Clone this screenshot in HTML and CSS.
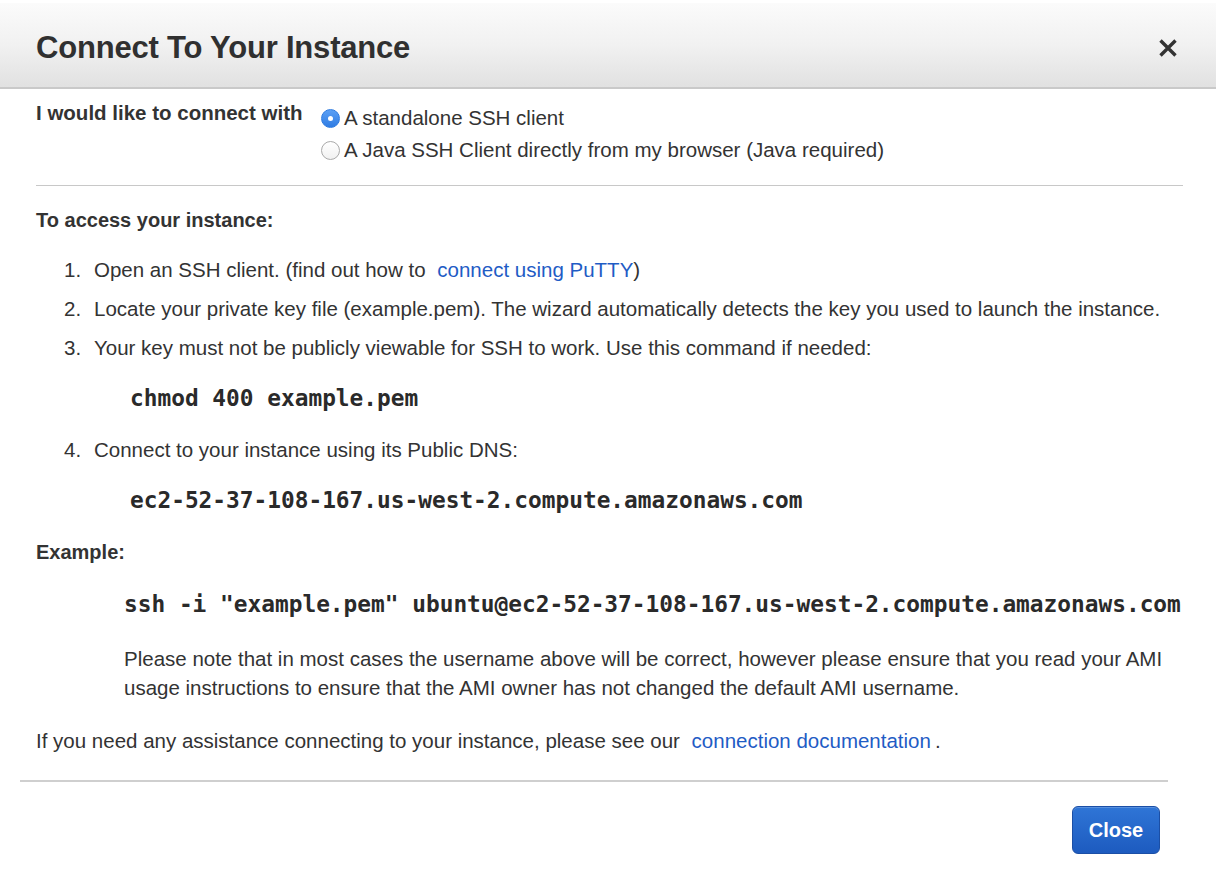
FILE: index.html
```html
<!DOCTYPE html>
<html>
<head>
<meta charset="utf-8">
<title>Connect To Your Instance</title>
<link rel="stylesheet" href="styles.css">
</head>
<body>
<div class="dialog">
  <div class="header">
    <h1 class="title">Connect To Your Instance</h1>
    <span class="close-x" aria-label="Close">
      <svg width="20" height="20" viewBox="0 0 20 20"><path d="M2.5 2.5 L17.5 17.5 M17.5 2.5 L2.5 17.5" stroke="#333" stroke-width="3.4" stroke-linecap="butt" fill="none"/></svg>
    </span>
  </div>
  <div class="body">
    <div class="connect-row">
      <div class="connect-label">I would like to connect with</div>
      <div class="radios">
        <label class="radio-row"><span class="radio checked"></span>A standalone SSH client</label>
        <label class="radio-row"><span class="radio"></span>A Java SSH Client directly from my browser (Java required)</label>
      </div>
    </div>
    <div class="divider"></div>
    <div class="heading">To access your instance:</div>
    <div class="steps">
      <div class="step"><span class="num">1.</span><span>Open an SSH client. (find out how to <a class="link" href="#">connect using PuTTY</a>)</span></div>
      <div class="step"><span class="num">2.</span><span>Locate your private key file (example.pem). The wizard automatically detects the key you used to launch the instance.</span></div>
      <div class="step"><span class="num">3.</span><span>Your key must not be publicly viewable for SSH to work. Use this command if needed:</span></div>
    </div>
    <div class="code code-step">chmod 400 example.pem</div>
    <div class="steps steps-4">
      <div class="step"><span class="num">4.</span><span>Connect to your instance using its Public DNS:</span></div>
    </div>
    <div class="code code-step">ec2-52-37-108-167.us-west-2.compute.amazonaws.com</div>
    <div class="heading heading-example">Example:</div>
    <div class="code code-example">ssh -i "example.pem" ubuntu@ec2-52-37-108-167.us-west-2.compute.amazonaws.com</div>
    <p class="note">Please note that in most cases the username above will be correct, however please ensure that you read your AMI usage instructions to ensure that the AMI owner has not changed the default AMI username.</p>
    <p class="help">If you need any assistance connecting to your instance, please see our <a class="link link-doc" href="#">connection documentation</a>.</p>
  </div>
  <div class="footer-divider"></div>
  <div class="footer">
    <button class="btn-close">Close</button>
  </div>
</div>
</body>
</html>
```
FILE: styles.css
```css
html, body {
  margin: 0;
  padding: 0;
  background: #ffffff;
}
body {
  font-family: "Liberation Sans", Arial, Helvetica, sans-serif;
  color: #333333;
  font-size: 20.5px;
}
.dialog {
  width: 1217px;
  padding-top: 3px;
}
.header {
  box-sizing: border-box;
  height: 86px;
  background: linear-gradient(to bottom, #fbfbfb 0%, #f1f1f1 50%, #e1e1e1 100%);
  border-bottom: 2px solid #c9c9c9;
  display: flex;
  align-items: center;
  justify-content: space-between;
  padding: 5px 38px 0 36px;
  margin-right: 1px;
}
.title {
  margin: 0;
  font-size: 31px;
  font-weight: bold;
  color: #303030;
  letter-spacing: -0.2px;
  line-height: 36px;
}
.close-x {
  display: flex;
  width: 20px;
  height: 20px;
}
.body {
  padding: 0 34px 0 36px;
}
.connect-row {
  display: flex;
  margin-top: 12px;
}
.connect-label {
  font-weight: bold;
  line-height: 24px;
  width: 285px;
  font-size: 20.5px;
  white-space: nowrap;
}
.radios {
  display: flex;
  flex-direction: column;
  gap: 8px;
  padding-top: 5px;
}
.radio-row {
  display: flex;
  align-items: center;
  line-height: 24px;
}
.radio {
  display: inline-block;
  box-sizing: border-box;
  width: 19px;
  height: 19px;
  border-radius: 50%;
  border: 1px solid #a9a9a9;
  background: linear-gradient(to bottom, #ffffff, #f1f1f1);
  margin-right: 4px;
  position: relative;
}
.radio.checked {
  border: 1px solid #2e7be0;
  background: linear-gradient(to bottom, #5ba0f5, #2f7ce3);
}
.radio.checked::after {
  content: "";
  position: absolute;
  left: 6px;
  top: 6px;
  width: 5px;
  height: 5px;
  border-radius: 50%;
  background: #ffffff;
}
.divider {
  height: 1px;
  background: #c8c8c8;
  margin-top: 23px;
}
.heading {
  font-weight: bold;
  line-height: 24px;
  margin-top: 22px;
  font-size: 20px;
}
.steps {
  margin-top: 26px;
  display: flex;
  flex-direction: column;
  gap: 15px;
}
.step {
  display: flex;
  line-height: 24px;
  padding-left: 28px;
}
.num {
  width: 30px;
  flex: none;
}
.link {
  color: #1f5cc5;
  text-decoration: none;
  margin-left: 6px;
}
.link-doc {
  margin-right: 4px;
}
.code {
  font-family: "DejaVu Sans Mono", "Liberation Mono", monospace;
  font-weight: bold;
  font-size: 22.8px;
  line-height: 28px;
  color: #2a2a2a;
  white-space: nowrap;
}
.code-step {
  margin-top: 24px;
  padding-left: 94px;
}
.steps-4 {
  margin-top: 26px;
}
.heading-example {
  margin-top: 26px;
}
.code-example {
  margin-top: 26px;
  padding-left: 88px;
}
.note {
  margin: 26px 0 0 0;
  padding-left: 88px;
  line-height: 29px;
}
.help {
  margin: 27px 0 0 0;
  line-height: 24px;
}
.footer-divider {
  height: 2px;
  background: #cfcfcf;
  margin: 27px 49px 0 20px;
}
.footer {
  display: flex;
  justify-content: flex-end;
  padding-right: 57px;
  margin-top: 24px;
}
.btn-close {
  width: 88px;
  height: 48px;
  border-radius: 6px;
  border: 1px solid #1b4fa6;
  background: linear-gradient(to bottom, #2f75d6 0%, #1d5bbf 100%);
  color: #ffffff;
  font-family: "Liberation Sans", Arial, sans-serif;
  font-weight: bold;
  font-size: 20px;
  box-shadow: inset 0 1px 0 rgba(255,255,255,0.2);
}
```
